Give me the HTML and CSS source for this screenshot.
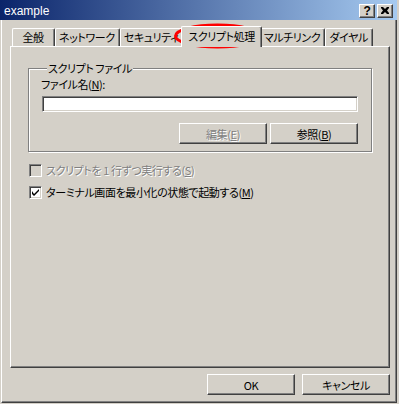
FILE: index.html
```html
<!DOCTYPE html>
<html lang="ja">
<head>
    <meta charset="UTF-8">
    <title>example</title>
    <link rel="stylesheet" href="styles.css">
</head>
<body>
    <div class="window">
        <div class="titlebar">
            <span class="title">example</span>
            <div class="caption-buttons">
                <span class="cap-btn help">?</span>
                <span class="cap-btn">
                    <svg width="8" height="7" viewBox="0 0 8 7">
                        <path d="M0 0h2l2 2 2-2h2v1l-2 2.5 2 2.5v1h-2l-2-2-2 2h-2v-1l2-2.5-2-2.5z" fill="#000"/>
                    </svg>
                </span>
            </div>
        </div>

        <div class="client">
            <div class="tabs">
                <span class="tab">全般</span>
                <span class="tab">ネットワーク</span>
                <span class="tab">セキュリティ</span>
                <span class="tab active">スクリプト処理</span>
                <span class="tab">マルチリンク</span>
                <span class="tab">ダイヤル</span>
            </div>

            <div class="panel">
                <fieldset class="group">
                    <legend>スクリプト ファイル</legend>
                    <div class="label">ファイル名(<u>N</u>):</div>
                    <div class="edit"></div>
                    <div class="btn-row">
                        <span class="btn disabled">編集(<u>E</u>)</span>
                        <span class="btn">参照(<u>B</u>)</span>
                    </div>
                </fieldset>

                <div class="check disabled">
                    <span class="box"></span>
                    <span>スクリプトを 1 行ずつ実行する(<u>S</u>)</span>
                </div>
                <div class="check">
                    <span class="box">
                        <svg width="7" height="7" viewBox="0 0 7 7">
                            <path d="M0 2v3l2 2 5-5v-2l-5 5z" fill="#000"/>
                        </svg>
                    </span>
                    <span>ターミナル画面を最小化の状態で起動する(<u>M</u>)</span>
                </div>
            </div>

            <div class="footer">
                <span class="btn">OK</span>
                <span class="btn">キャンセル</span>
            </div>
        </div>

        <!-- red marker drawn over the active tab -->
        <svg class="marker" width="90" height="28" viewBox="0 0 90 28">
            <ellipse cx="44.5" cy="13" rx="42" ry="11" fill="none" stroke="#f00" stroke-width="3"/>
        </svg>
    </div>
</body>
</html>
```

FILE: styles.css
```css
:root {
    --face: #D4D0C8;
    --shadow: #808080;
    --dark: #404040;
    --light: #FFFFFF;
}

* {
    box-sizing: border-box;
}

body {
    margin: 0;
    background: var(--face);
    font-family: "Noto Sans CJK JP", sans-serif;
    font-size: 11px;
    letter-spacing: -0.4px;
    color: #000;
    font-feature-settings: "palt";
}

.window {
    position: relative;
    width: 397px;
    height: 403px;
    display: flex;
    flex-direction: column;
}

.titlebar {
    height: 20px;
    display: flex;
    align-items: center;
    justify-content: space-between;
    padding: 1px 4px 0 4px;
    background: linear-gradient(to right, #0A246A, #A6CAF0);
}

.title {
    color: #fff;
    font-family: "Liberation Sans", sans-serif;
    font-size: 12px;
    letter-spacing: 0;
}

.caption-buttons {
    display: flex;
    gap: 2px;
}

.cap-btn {
    width: 16px;
    height: 14px;
    display: flex;
    align-items: center;
    justify-content: center;
    background: var(--face);
    border-top: 1px solid var(--light);
    border-left: 1px solid var(--light);
    border-right: 1px solid var(--dark);
    border-bottom: 1px solid var(--dark);
    box-shadow: inset -1px -1px var(--shadow);
}

.cap-btn.help {
    font-family: "Liberation Sans", sans-serif;
    font-weight: bold;
    font-size: 12px;
    line-height: 1;
}

.client {
    flex: 1;
    margin-left: 1px;
    border-left: 1px solid var(--light);
    border-right: 1px solid var(--dark);
    border-bottom: 1px solid var(--dark);
    box-shadow: inset -1px -1px var(--shadow);
    padding: 8px 0 0 8px;
}

.tabs {
    display: flex;
    align-items: flex-end;
    height: 18px;
    padding-left: 2px;
}

.tab {
    min-width: 43px;
    height: 18px;
    padding: 0 4px 0 3px;
    line-height: 16px;
    text-align: center;
    border-top: 1px solid var(--light);
    border-left: 1px solid var(--light);
    border-right: 1px solid var(--dark);
    box-shadow: inset -1px 0 var(--shadow);
    border-radius: 2px 2px 0 0;
    white-space: nowrap;
}

.tab.active {
    position: relative;
    z-index: 1;
    height: 21px;
    margin: 0 -2px -1px;
    padding: 0 6px;
    line-height: 18px;
    background: var(--face);
}

.panel {
    width: 380px;
    height: 322px;
    border-top: 1px solid var(--light);
    border-left: 1px solid var(--light);
    border-right: 1px solid var(--dark);
    border-bottom: 1px solid var(--dark);
    box-shadow: inset -1px -1px var(--shadow);
    padding: 13px 0 0 17px;
}

.group {
    width: 344px;
    margin: 0;
    padding: 0 13px 7px 13px;
    border: 1px solid var(--shadow);
    box-shadow: inset 1px 1px var(--light), 1px 1px var(--light);
}

.group legend {
    margin-left: 5px;
    padding: 0 1px;
    line-height: 16px;
    background: var(--face);
}

.label {
    line-height: 14px;
    margin: 1px 0 5px -1px;
}

.edit {
    height: 16px;
    background: #fff;
    border-top: 1px solid var(--shadow);
    border-left: 1px solid var(--shadow);
    border-right: 1px solid var(--light);
    border-bottom: 1px solid var(--light);
    box-shadow: inset 1px 1px var(--dark), inset -1px -1px var(--face);
}

.btn-row {
    display: flex;
    justify-content: flex-end;
    gap: 3px;
    margin-top: 11px;
}

.btn {
    width: 88px;
    height: 21px;
    display: flex;
    align-items: center;
    justify-content: center;
    background: var(--face);
    border-top: 1px solid var(--light);
    border-left: 1px solid var(--light);
    border-right: 1px solid var(--dark);
    border-bottom: 1px solid var(--dark);
    box-shadow: inset -1px -1px var(--shadow);
}

.btn.disabled,
.check.disabled {
    color: var(--shadow);
    text-shadow: 1px 1px 0 var(--light);
}

.check {
    display: flex;
    align-items: center;
    gap: 4px;
    height: 16px;
    margin: 6px 0 0 1px;
}

.group + .check {
    margin-top: 10px;
}

.box {
    width: 13px;
    height: 13px;
    display: flex;
    align-items: center;
    justify-content: center;
    background: #fff;
    border-top: 1px solid var(--shadow);
    border-left: 1px solid var(--shadow);
    border-right: 1px solid var(--light);
    border-bottom: 1px solid var(--light);
    box-shadow: inset 1px 1px var(--dark), inset -1px -1px var(--face);
}

.check.disabled .box {
    background: var(--face);
}

.footer {
    width: 380px;
    display: flex;
    justify-content: flex-end;
    gap: 7px;
    margin-top: 6px;
}

.marker {
    position: absolute;
    left: 173px;
    top: 23px;
}
```
